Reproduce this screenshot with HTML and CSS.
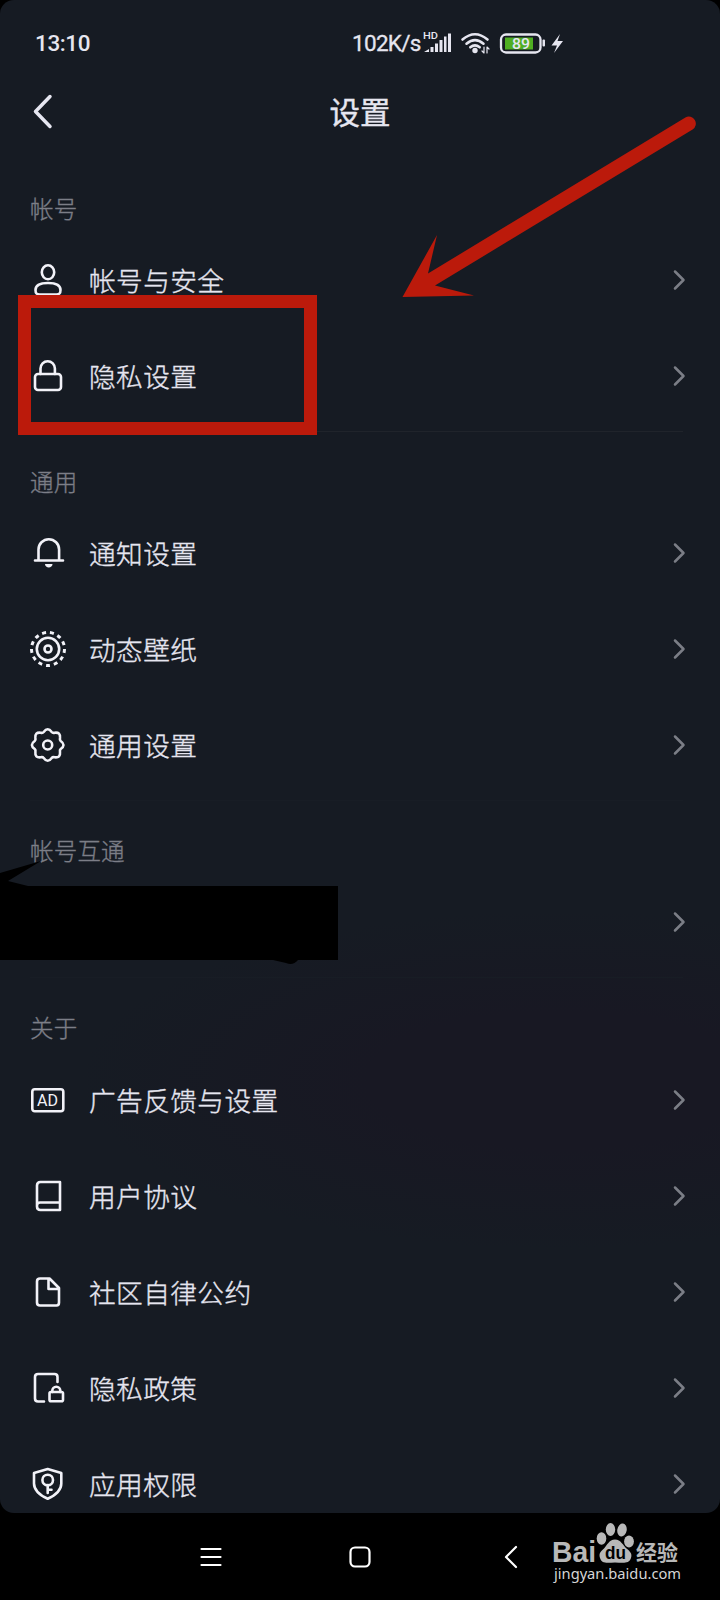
FILE: index.html
```html
<!DOCTYPE html>
<html lang="zh-CN">
<head>
<meta charset="utf-8">
<title>设置</title>
<link rel="stylesheet" href="styles.css">
</head>
<body>
<svg class="defs" width="0" height="0">
  <symbol id="chev" viewBox="0 0 14 22"><path d="M3 2.500l8.500 8.500L3 19.500"/></symbol>
</svg>
<div class="phone">
  <main class="screen">
    <div class="status">
      <span class="time">13:10</span>
      <span class="speed">102K/s</span>
      <svg class="status-icons" width="150" height="36" viewBox="0 0 150 36">
        <text class="hd" x="8" y="14" textLength="15" lengthAdjust="spacingAndGlyphs">HD</text>
        <g class="solid">
          <path d="M9 27l5-3v3zM15.500 22h3v5h-3zM20 18.500h3v8.500h-3zM24.500 15h3v12h-3zM29 11.500h2.500v15.500h-2.500zM33 8.500h3v18.500h-3z"/>
          <circle cx="60" cy="25.500" r="2.700"/>
          <path d="M145 9L136.500 20.500h5.500L139 28l9-12h-5.500z"/>
          <rect x="127.500" y="14.500" width="2.500" height="7" rx="1"/>
        </g>
        <g class="wifi"><path d="M47.500 14.500Q60 4 72.500 14.500M51.500 18.700Q60 11.500 68.500 18.700M55.300 22.300Q60 18.500 64.700 22.300"/><path class="thin" d="M69 22v6l-2-2M72 28v-6l2 2"/></g>
        <rect class="battery" x="86" y="9.500" width="39.500" height="18" rx="5"/>
        <rect class="charge" x="90" y="12.500" width="28" height="12"/>
        <text class="pct" x="97" y="24" textLength="18" lengthAdjust="spacingAndGlyphs">89</text>
      </svg>
    </div>
    <header class="bar">
      <svg class="back" width="20" height="36" viewBox="0 0 20 36"><path d="M17 2.500L2.500 17.500 17 32.500"/></svg>
      <h1>设置</h1>
    </header>

    <section>
      <h2>帐号</h2>
      <div class="row"><svg class="ic" viewBox="0 0 40 40"><ellipse cx="20" cy="12.300" rx="6.200" ry="7"/><path d="M7.500 30c0-5 5-7 12.500-7s12.500 2 12.500 7c0 4-1.500 4.500-4 4.500h-17c-2.500 0-4-.5-4-4.500z"/></svg><span>帐号与安全</span><svg class="chev"><use href="#chev"/></svg></div>
      <div class="row"><svg class="ic" viewBox="0 0 40 40"><rect x="7" y="18" width="26" height="16" rx="3"/><path d="M12.500 18v-5.500a7.200 7.200 0 0 1 14.400 0V18"/></svg><span>隐私设置</span><svg class="chev"><use href="#chev"/></svg></div>
    </section>

    <section>
      <h2>通用</h2>
      <div class="row"><svg class="ic" viewBox="0 0 40 40"><path d="M7 27.500h28M10.500 27V16.500a10.300 10.300 0 0 1 20.600 0V27"/><path class="fill" d="M17 31h7.500c0 4.500-7.500 4.500-7.500 0z"/></svg><span>通知设置</span><svg class="chev"><use href="#chev"/></svg></div>
      <div class="row"><svg class="ic" viewBox="0 0 40 40"><circle class="dash" cx="20" cy="20" r="16.500" pathLength="130"/><circle cx="20" cy="20" r="11.200"/><circle cx="20" cy="20" r="3.500"/></svg><span>动态壁纸</span><svg class="chev"><use href="#chev"/></svg></div>
      <div class="row"><svg class="ic" viewBox="0 0 40 40"><path transform="translate(19.700 20)" d="M-4-13Q0-18.600 4-13Q5-11.800 7-12.300Q13-13 12.300-7Q11.800-5 13-4Q18.600 0 13 4Q11.800 5 12.300 7Q13 13 7 12.300Q5 11.800 4 13Q0 18.600-4 13Q-5 11.800-7 12.300Q-13 13-12.300 7Q-11.800 5-13 4Q-18.600 0-13-4Q-11.800-5-12.300-7Q-13-13-7-12.300Q-5-11.800-4-13z"/><circle cx="19.700" cy="20" r="4.500"/></svg><span>通用设置</span><svg class="chev"><use href="#chev"/></svg></div>
    </section>

    <section class="faint">
      <h2>帐号互通</h2>
      <div class="row redacted"><svg class="scribble" width="340" height="110" viewBox="0 0 340 110"><path d="M0 13L41 1 8 21 28 26H338V100H298q-5 6-12 3L273 100H0z"/></svg><svg class="chev"><use href="#chev"/></svg></div>
    </section>

    <section class="faint">
      <h2>关于</h2>
      <div class="row"><svg class="ic" viewBox="0 0 40 40"><rect x="4.300" y="9.300" width="31" height="22" rx="2.500"/><text x="9" y="26" textLength="21" lengthAdjust="spacingAndGlyphs">AD</text></svg><span>广告反馈与设置</span><svg class="chev"><use href="#chev"/></svg></div>
      <div class="row"><svg class="ic" viewBox="0 0 40 40"><path d="M32 6H12.500Q9 6 9 9.500v21Q9 34 12.500 34H32zM9 29.500Q9 26.500 12 26.500h20"/></svg><span>用户协议</span><svg class="chev"><use href="#chev"/></svg></div>
      <div class="row"><svg class="ic" viewBox="0 0 40 40"><path d="M21.500 6.500H12q-3 0-3 3v21q0 3 3 3h16.500q2.500 0 2.500-3V16zM20.500 7v10H31"/></svg><span>社区自律公约</span><svg class="chev"><use href="#chev"/></svg></div>
      <div class="row"><svg class="ic" viewBox="0 0 40 40"><path d="M29.500 14V9q0-3-3-3H10Q7 6 7 9v21.500q0 3 3 3h6"/><rect x="21.500" y="24" width="13.500" height="9.300" rx="1.500"/><path d="M24.300 24v-1.200a4 4 0 0 1 8 0V24"/></svg><span>隐私政策</span><svg class="chev"><use href="#chev"/></svg></div>
      <div class="row"><svg class="ic" viewBox="0 0 40 40"><path d="M19.700 5L33.300 9v10.500q0 9-13.600 15.300Q6 28.500 6 19.500V9z"/><circle cx="19.700" cy="16" r="5.300"/><path d="M19.700 21v8M20 25.700h3.500"/></svg><span>应用权限</span><svg class="chev"><use href="#chev"/></svg></div>
    </section>
  </main>

  <footer class="nav">
    <svg width="22" height="20" viewBox="0 0 22 20"><path d="M1.500 2h19M1.500 10h19M1.500 18h19"/></svg>
    <svg width="22" height="22" viewBox="0 0 22 22"><rect x="1.500" y="1.500" width="19" height="19" rx="4.500"/></svg>
    <svg width="16" height="24" viewBox="0 0 16 24"><path d="M13 2L3 12l10 10"/></svg>
  </footer>

  <svg class="watermark" width="140" height="70" viewBox="0 0 140 70">
    <text class="bai" x="1" y="42" textLength="44" lengthAdjust="spacingAndGlyphs">Bai</text>
    <ellipse cx="50.500" cy="18.500" rx="4.800" ry="6.200"/><ellipse cx="59.500" cy="9.500" rx="4.700" ry="6.500"/><ellipse cx="71" cy="10" rx="4.700" ry="6.500" transform="rotate(10 71 10)"/><ellipse cx="78" cy="21.500" rx="4.900" ry="6"/>
    <path d="M64 19.500c6 0 8 6 11.500 9s6 5 4.500 9.500c-2 6.500-9 4.500-16 4.500s-13 2-15-4.500c-1.500-5 1-6.500 4-9.500s5-9 11-9z"/>
    <text class="du" x="54" y="39" textLength="21" lengthAdjust="spacingAndGlyphs">du</text>
    <text class="jy" x="85" y="40" textLength="42" lengthAdjust="spacingAndGlyphs">经验</text>
    <text class="url" x="3" y="59" textLength="127" lengthAdjust="spacingAndGlyphs">jingyan.baidu.com</text>
  </svg>

  <div class="highlight"></div>
  <svg class="arrow" width="300" height="190" viewBox="0 0 300 190"><path d="M2.500 187L37 125 28 163.500 285.400 7.500A7 7 0 0 1 292.600 19.500L35 175.500 74 185.500z"/></svg>
</div>
</body>
</html>
```
FILE: styles.css
```css
* { box-sizing: border-box; }
body { margin: 0; background: #000; color: #e6e6f0; font-family: Roboto, "Noto Sans CJK SC", sans-serif; }
svg { display: block; flex: none; fill: none; stroke: currentColor; stroke-linecap: round; stroke-linejoin: round; }
svg text, .solid { fill: currentColor; stroke: none; }
.defs { position: absolute; }
.phone { position: relative; width: 720px; height: 1600px; overflow: hidden; background: #000; display: flex; flex-direction: column; }
.screen { height: 1513px; flex: none; overflow: hidden; border-radius: 14px; background: radial-gradient(ellipse 480px 170px at 560px 1080px, #181823 40%, transparent 100%), #161b23; }

.status { height: 86px; display: flex; align-items: flex-start; padding-top: 25px; }
.time, .speed { font-size: 22.5px; line-height: 36px; font-weight: 500; white-space: nowrap; }
.time { width: 316px; padding-left: 35px; letter-spacing: -.4px; }
.speed { width: 64px; margin-left: 36px; font-weight: 400; letter-spacing: -.7px; -webkit-text-stroke: .3px currentColor; }
.status-icons { width: 150px; margin-left: -1px; }
.hd { font-size: 9.5px; font-weight: 500; }
.wifi { stroke-width: 2.6; }
.thin { stroke-width: 1.2; }
.battery { stroke-width: 2.3; }
.status-icons .charge { fill: #4fae22; stroke: none; }
.pct { font-size: 15.5px; font-weight: 500; }

.bar { height: 72px; display: grid; grid-template-columns: 34px 652px 34px; margin-top: -10px; align-items: center; }
.back { margin-left: 33px; stroke-width: 3.5; }
.bar h1 { margin: 0; text-align: center; font-size: 30.500px; line-height: 44px; font-weight: 400; padding-top: 3px; -webkit-text-stroke: .4px currentColor; }

section { padding: 0 30px 7px; position: relative; }
section + section::before { content: ""; display: block; height: 1px; margin: 0 7px 0 0; background: #20242b; }
section.faint::before { background: #181d25; }
h2 { margin: 0; height: 73.2px; padding-top: 34px; font-size: 23.500px; line-height: 34px; font-weight: 300; color: #7c7e87; letter-spacing: .2px; -webkit-text-stroke: .35px currentColor; }
.bar + section h2 { height: 84px; padding-top: 45px; }
.row { height: 96px; display: flex; align-items: center; }
.ic { width: 40px; height: 40px; margin: 0 21px 0 -2px; stroke-width: 2.6; color: #f2f2f8; }
.ic .fill { fill: currentColor; stroke: none; }
.ic text { font-size: 16px; font-weight: 400; }
.ic .dash { stroke-linecap: butt; stroke-dasharray: 5 5; stroke-dashoffset: 0; stroke-width: 3; }
.row span { font-size: 26.700px; line-height: 40px; font-weight: 300; letter-spacing: .4px; padding-top: 4px; white-space: nowrap; -webkit-text-stroke: .35px currentColor; }
.chev { width: 14px; height: 22px; margin-left: auto; margin-right: 4px; color: #7b7e86; stroke-width: 2.5; }
.redacted { position: relative; }
.scribble { position: absolute; left: -30px; top: -14.500px; fill: #000; stroke: none; }

.nav { height: 87px; display: flex; align-items: center; padding-left: 200px; color: #fff; }
.nav svg { stroke-width: 2.2; }
.nav svg:nth-child(2) { margin-left: 127px; }
.nav svg:nth-child(3) { margin-left: 132px; }

.watermark { position: absolute; left: 551px; top: 1520px; fill: #b8b8b8; stroke: none; color: #b8b8b8; }
.bai { font: 700 29px "Liberation Sans", sans-serif; }
.watermark .du { font: 700 18px "Liberation Sans", sans-serif; fill: #000; }
.jy { font: 700 21px "Noto Sans CJK SC", sans-serif; }
.watermark .url { font: 15px "Noto Sans", sans-serif; fill: #d5d5d5; }

.highlight { position: absolute; left: 18px; top: 295px; width: 299px; height: 140px; border: 13.500px solid #bb1a0b; }
.arrow { position: absolute; left: 400px; top: 110px; fill: #bb1a0b; stroke: none; }
```
